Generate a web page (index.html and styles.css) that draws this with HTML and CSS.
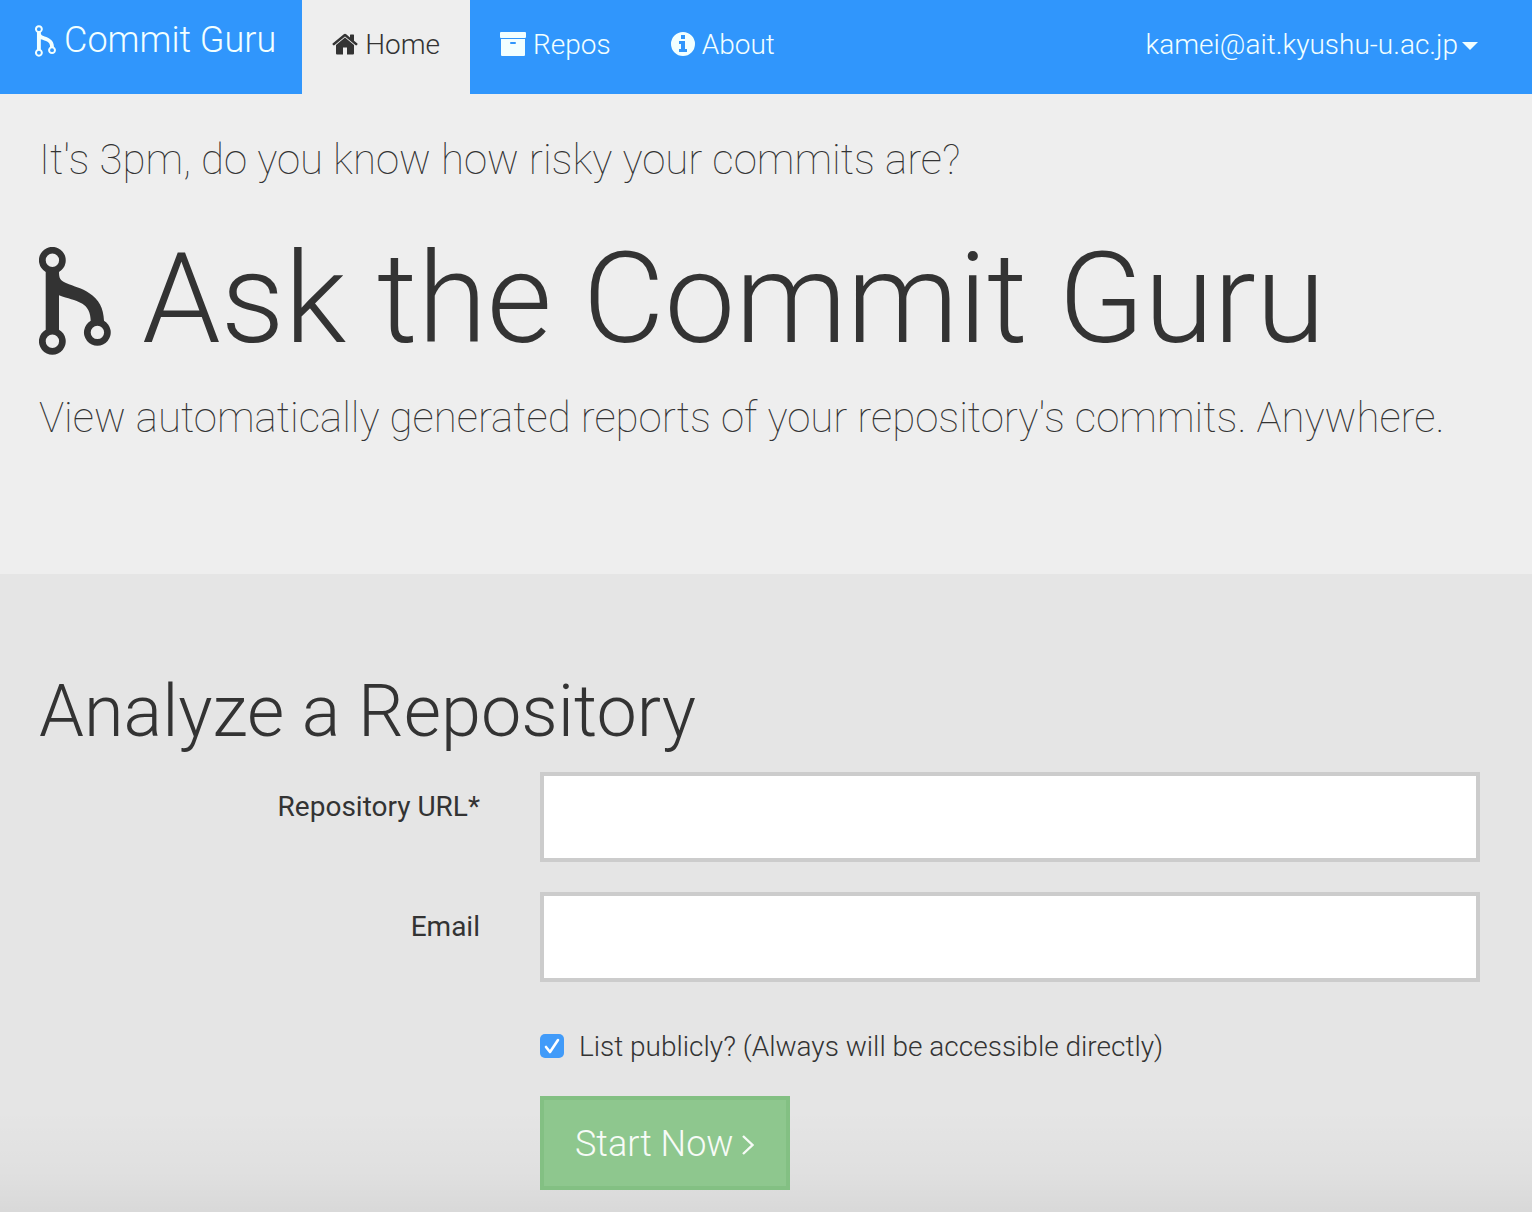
FILE: index.html
```html
<!DOCTYPE html>
<html lang="en">
<head>
<meta charset="utf-8">
<meta name="viewport" content="width=device-width, initial-scale=1">
<title>Commit Guru</title>
<link rel="stylesheet" href="styles.css">
</head>
<body>
<svg width="0" height="0" class="sprite" aria-hidden="true">
  <symbol id="merge" viewBox="0 0 72 108">
    <path fill="currentColor" fill-rule="evenodd" d="M20 24.700C20 31 21 33.500 27 36C35 39.500 43 41 50 46C60 52.500 64.500 61 65 73.800A13.400 13.400 0 1 1 51.700 73.800C51.500 66 49 60 43 56.500C36 52.500 29 51.500 20 48.200V82.700A13.400 13.400 0 1 1 6.700 82.700V24.900A13.400 13.400 0 1 1 20 24.900ZM13.400 6.600a6.700 6.700 0 1 0 0 13.400a6.700 6.700 0 1 0 0-13.400ZM13.400 87.600a6.700 6.700 0 1 0 0 13.400a6.700 6.700 0 1 0 0-13.400ZM58.400 78.700a6.700 6.700 0 1 0 0 13.400a6.700 6.700 0 1 0 0-13.400Z"/>
  </symbol>
</svg>
<nav class="navbar">
  <a class="brand" href="#"><svg class="brand-icon" aria-hidden="true"><use href="#merge"/></svg>Commit Guru</a>
  <a class="tab active" href="#" aria-current="page"><svg class="tab-icon" viewBox="0 0 26 24" aria-hidden="true"><path fill="currentColor" d="M13 5.500L22 13V21.500Q22 22.500 21 22.500H15V15.500H11V22.500H5Q4 22.500 4 21.500V13ZM.600 11.500L11.800 2.200Q13 1.300 14.200 2.200L18 5.400V3Q18 2.400 18.600 2.400H21.400Q22 2.400 22 3V8.700L25.400 11.500Q25.800 11.900 25.400 12.400L24.600 13.300Q24.200 13.600 23.700 13.300L13 4.400L2.300 13.300Q1.800 13.600 1.400 13.300L.600 12.400Q.200 11.900 .600 11.500Z"/></svg>Home</a>
  <a class="tab" href="#"><svg class="tab-icon" viewBox="0 0 26 24" aria-hidden="true"><path fill="currentColor" fill-rule="evenodd" d="M1 0H25Q26 0 26 1V5Q26 6 25 6H1Q0 6 0 5V1Q0 0 1 0ZM1 7H25V23Q25 24 24 24H2Q1 24 1 23ZM11 10Q10 10 10 11T11 12H15Q16 12 16 11T15 10Z"/></svg>Repos</a>
  <a class="tab" href="#"><svg class="tab-icon info" viewBox="0 0 24 24" aria-hidden="true"><path fill="currentColor" fill-rule="evenodd" d="M12 0a12 12 0 1 0 0 24a12 12 0 1 0 0-24ZM10 3H14V7H10ZM8 9H14V17H16V20H8V17H10V12H8Z"/></svg>About</a>
  <button class="account" type="button">kamei@ait.kyushu-u.ac.jp<span class="caret"></span></button>
</nav>
<header class="hero">
  <p class="lead">It's 3pm, do you know how risky your commits are?</p>
  <h1><svg class="hero-icon" aria-hidden="true"><use href="#merge"/></svg>Ask the Commit Guru</h1>
  <p class="lead">View automatically generated reports of your repository's commits. Anywhere.</p>
</header>
<main class="analyze">
  <h2>Analyze a Repository</h2>
  <form class="form">
    <label class="label" for="url">Repository URL*</label>
    <input class="field" id="url" type="text">
    <label class="label" for="email">Email</label>
    <input class="field" id="email" type="email">
    <div class="check"><input id="public" type="checkbox" checked><label for="public">List publicly? (Always will be accessible directly)</label></div>
    <button class="start" type="submit">Start Now<svg viewBox="0 0 12 20" aria-hidden="true"><path fill="none" stroke="currentColor" stroke-width="2.400" d="M1 1L10.500 10L1 19"/></svg></button>
  </form>
</main>
</body>
</html>
```
FILE: styles.css
```css
* { box-sizing: border-box; }
body {
  margin: 0;
  min-height: 100vh;
  display: flex;
  flex-direction: column;
  font: 300 28px/40px Roboto, sans-serif;
  color: #333;
  background: #eee;
}
h1, h2, p { margin: 0; font-weight: 300; }
.sprite { display: block; position: absolute; }

.navbar {
  display: flex;
  min-height: 94px;
  padding-right: 24px;
  background: #3096fc;
  color: #f2ffff;
}
.brand, .tab { color: inherit; text-decoration: none; white-space: nowrap; }
.brand {
  display: flex;
  gap: 8px;
  padding: 20px 26px 0 35px;
  font-size: 36px;
}
.brand-icon { width: 21px; height: 32px; margin-top: 5px; }
.tab {
  display: flex;
  gap: 7px;
  padding: 25px 30px 0;
}
.tab.active { background: #eee; color: #333; }
.tab-icon { width: 26px; height: 24px; margin-top: 7px; }
.tab-icon.info { width: 24px; }
.account {
  display: flex;
  gap: 4px;
  margin-left: auto;
  padding: 25px 30px 0;
  border: 0;
  background: none;
  color: inherit;
  font: inherit;
}
.caret {
  margin-top: 17px;
  border: 8px solid transparent;
  border-top-color: currentColor;
  border-bottom: 0;
}

.hero { min-height: 480px; padding: 36px 39px 0; }
.lead { font-size: 42px; line-height: 60px; font-weight: 100; }
h1 {
  display: flex;
  gap: 31px;
  margin: 44px 0 24px;
  font-size: 126px;
  line-height: 130px;
}
.hero-icon { width: 72px; height: 108px; margin-top: 13px; }

.analyze {
  flex: 1;
  padding: 98px 22px 22px 10px;
  background: linear-gradient(#0000 84%, #00000006 94%, #0000000e) #e5e5e5;
}
h2 { padding: 0 29px; font-size: 72px; line-height: 80px; }
.form {
  display: grid;
  grid-template-columns: 1fr 2fr;
  row-gap: 30px;
  margin-top: 20px;
}
.label { padding: 15px 30px 0; text-align: right; font-weight: 400; }
.field {
  height: 90px;
  margin: 0 30px;
  padding: 12px 24px;
  border: 4px solid #ccc;
  border-radius: 0;
  background: #fff;
  font: inherit;
}
.check, .start { grid-column: 2; margin-left: 30px; }
.check { display: flex; gap: 15px; padding-top: 15px; }
.check input {
  appearance: none;
  width: 24px;
  height: 24px;
  margin: 7px 0 0;
  border-radius: 5px;
  background: #419bf9 url("data:image/svg+xml,%3Csvg xmlns='http://www.w3.org/2000/svg' viewBox='0 0 24 24'%3E%3Cpath d='M6 13L10 18L18 6' fill='none' stroke='white' stroke-width='2.600' stroke-linecap='round' stroke-linejoin='round'/%3E%3C/svg%3E");
}
.start {
  display: flex;
  align-items: center;
  justify-self: start;
  gap: 8px;
  height: 94px;
  margin-top: -1px;
  padding: 2px 32px 0 31px;
  border: 4px solid #83c083;
  background: #8ec78e;
  color: #f7fbf7;
  font: 300 36px/40px Roboto, sans-serif;
}
.start svg { width: 12px; height: 20px; margin-top: 2px; }
```
